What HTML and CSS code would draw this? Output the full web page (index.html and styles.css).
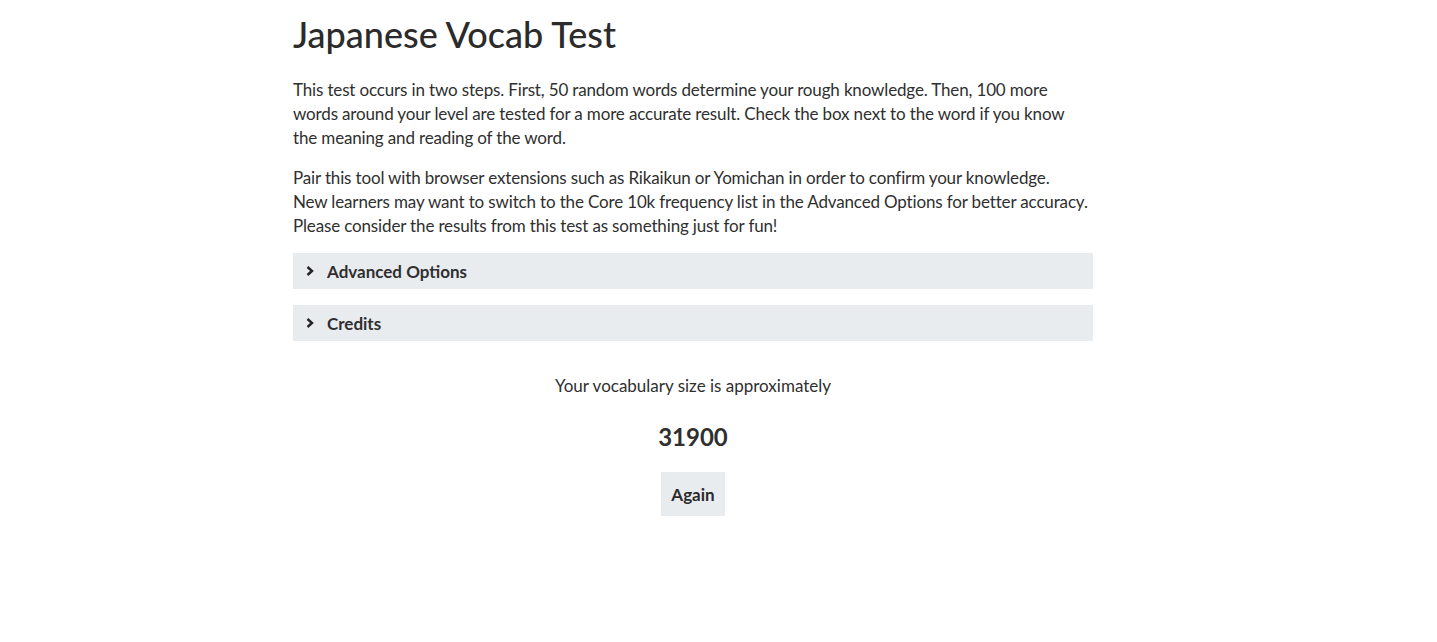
FILE: index.html
```html
<!DOCTYPE html>
<html lang="en">
<head>
<meta charset="utf-8">
<title>Japanese Vocab Test</title>
<link rel="stylesheet" href="styles.css">
</head>
<body>
<main class="page">
  <h1 class="title">Japanese Vocab Test</h1>
  <p class="intro">This test occurs in two steps. First, 50 random words determine your rough knowledge. Then, 100 more words around your level are tested for a more accurate result. Check the box next to the word if you know the&nbsp;meaning and reading of the word.</p>
  <p class="intro intro-last">Pair this tool with browser extensions such as Rikaikun or Yomichan in order to confirm your knowledge. New&nbsp;learners may want to switch to the Core 10k frequency list in the Advanced Options for better accuracy. Please consider the results from this test as something just for fun!</p>
  <details class="panel">
    <summary class="panel-summary">
      <svg class="chevron" width="10" height="12" viewBox="0 0 10 12" aria-hidden="true"><path d="M2.5 2 L7 6 L2.5 10" fill="none" stroke="#222" stroke-width="2.4"/></svg>
      <span>Advanced Options</span>
    </summary>
  </details>
  <details class="panel">
    <summary class="panel-summary">
      <svg class="chevron" width="10" height="12" viewBox="0 0 10 12" aria-hidden="true"><path d="M2.5 2 L7 6 L2.5 10" fill="none" stroke="#222" stroke-width="2.4"/></svg>
      <span>Credits</span>
    </summary>
  </details>
  <section class="result">
    <p class="result-label">Your vocabulary size is approximately</p>
    <p class="result-number">31900</p>
    <button class="again" type="button">Again</button>
  </section>
</main>
</body>
</html>
```
FILE: styles.css
```css
html, body {
  margin: 0;
  padding: 0;
  background: #ffffff;
}
body {
  padding-right: 51px;
  font-family: "Lato", "Noto Sans", sans-serif;
  color: #2f2f2f;
  font-size: 17px;
}
.page {
  max-width: 800px;
  margin: 0 auto;
}
.title {
  font-size: 36px;
  line-height: 44px;
  font-weight: 500;
  margin: 12px 0 22px;
  color: #2b2b2b;
}
.intro {
  margin: 0 0 16px;
  line-height: 24px;
  letter-spacing: -0.15px;
}
.intro-last {
  margin-bottom: 15px;
}
.panel {
  background: #e9ecef;
  margin-bottom: 16px;
}
.panel-summary {
  list-style: none;
  display: flex;
  align-items: center;
  gap: 12px;
  height: 36px;
  padding: 0 12px;
  font-weight: 700;
  cursor: pointer;
}
.panel-summary::-webkit-details-marker {
  display: none;
}
.chevron {
  display: block;
}
.result {
  display: flex;
  flex-direction: column;
  align-items: center;
  padding-top: 17px;
}
.result-label {
  margin: 0;
  line-height: 24px;
}
.result-number {
  margin: 23px 0 19px;
  font-size: 24px;
  line-height: 32px;
  font-weight: 700;
}
.again {
  width: 64px;
  height: 44px;
  border: none;
  background: #e9ecef;
  font-family: inherit;
  font-size: 17px;
  font-weight: 700;
  color: #2b2b2b;
  padding: 0;
}
```
